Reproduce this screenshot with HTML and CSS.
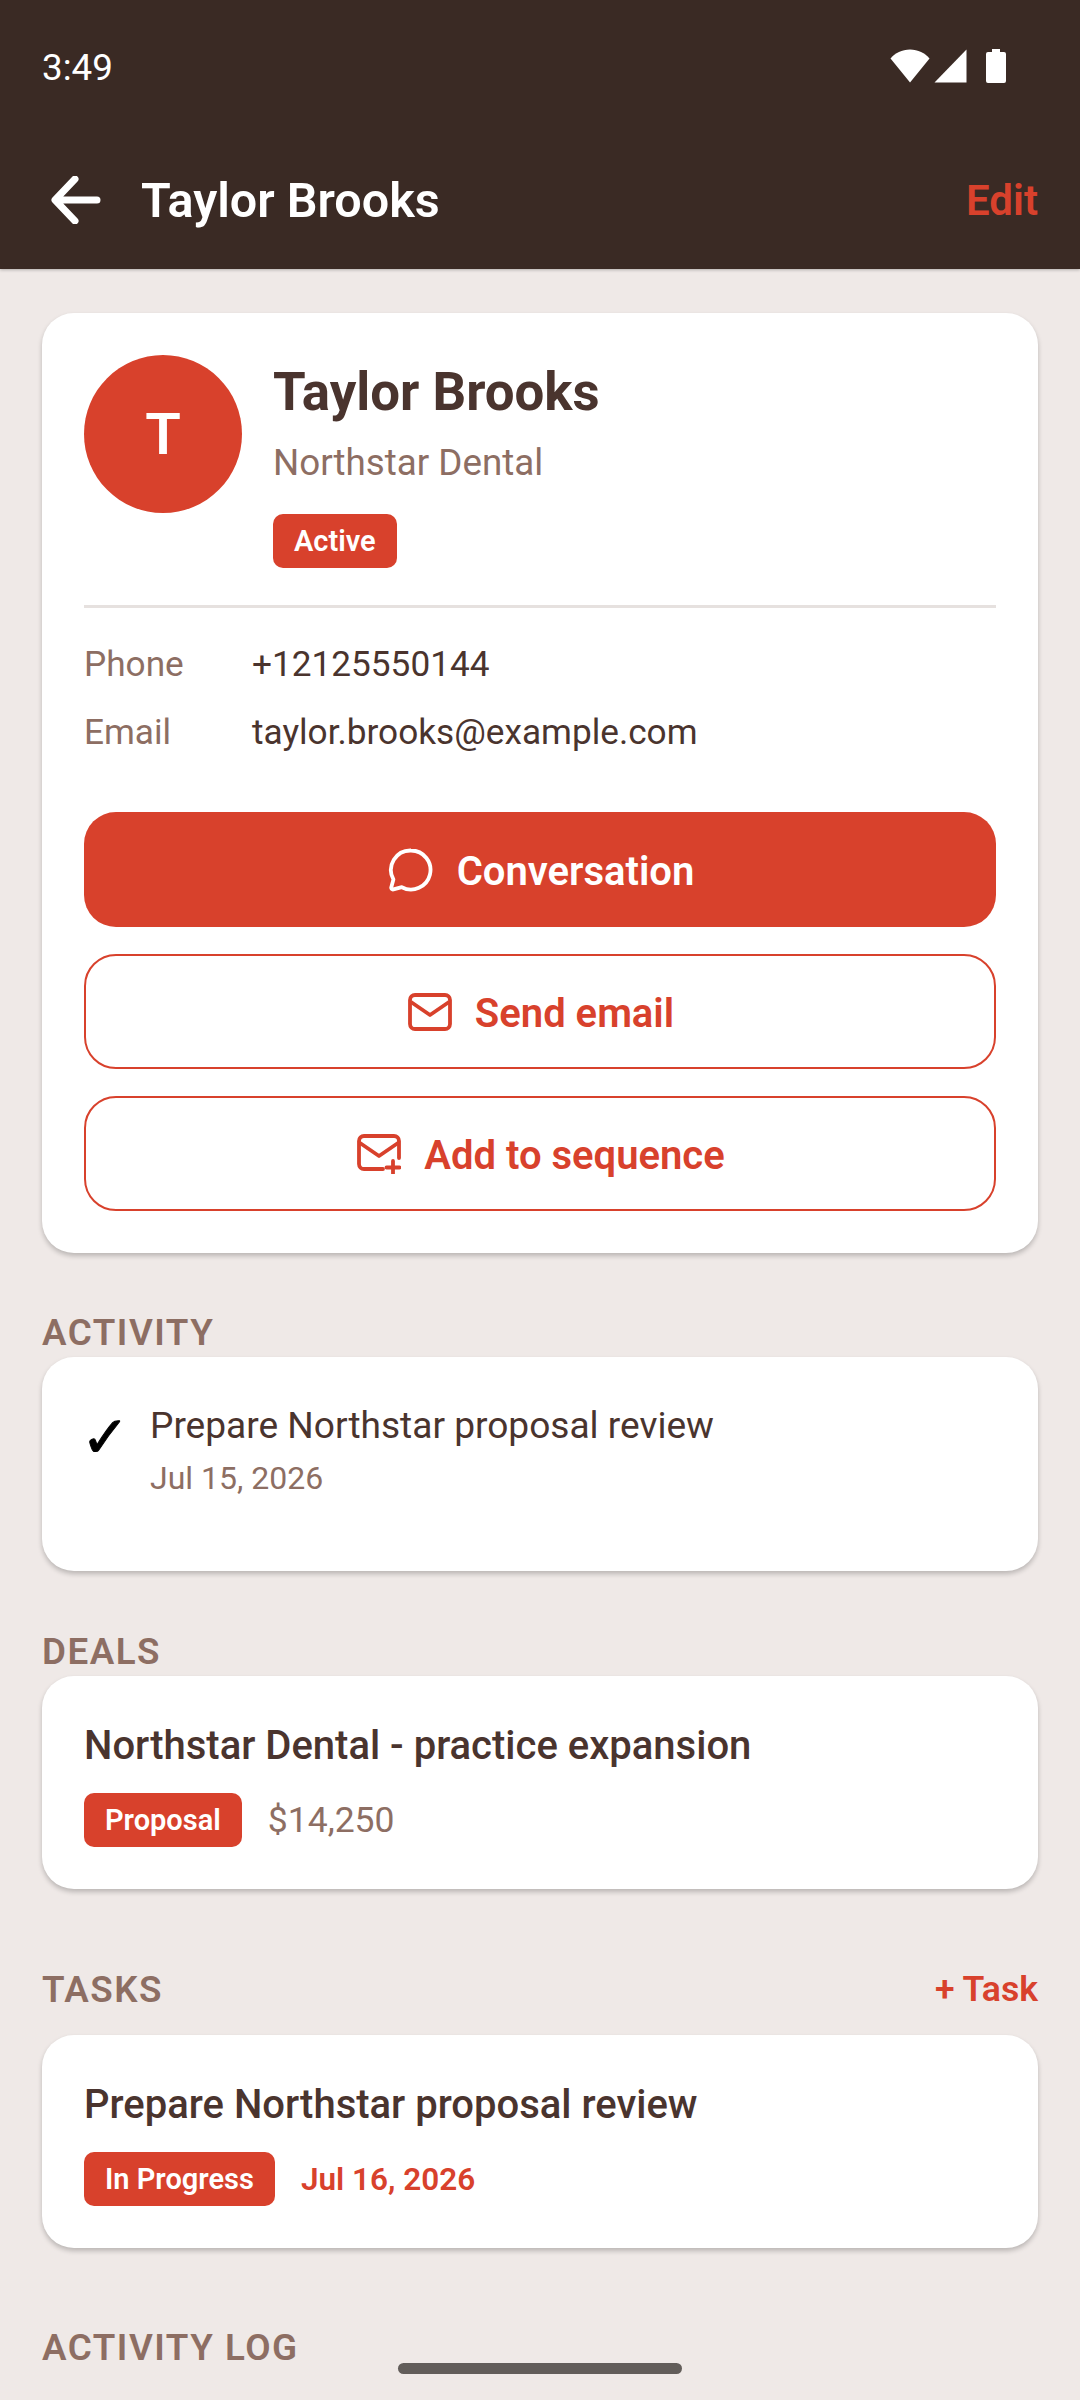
FILE: index.html
```html
<!DOCTYPE html>
<html>
<head lang="en">
    <meta charset="UTF-8">
    <title>Taylor Brooks</title>
    <link rel="stylesheet" href="styles.css">
</head>
<body>
<div class="screen">
    <header class="header">
        <div class="status">
            <span class="time">3:49</span>
            <div class="status-icons">
                <svg class="wifi" width="40" height="34" viewBox="0 0 40 34"><path d="M20 33.500 0.500 9.500C5 4 12 0.500 20 0.500s15 3.500 19.500 9z" fill="#fff"/></svg>
                <svg class="signal" width="33" height="34" viewBox="0 0 33 34"><path d="M32.500 0.500V33.500H0.500z" fill="#fff"/></svg>
                <svg class="battery" width="20" height="34" viewBox="0 0 20 34"><path d="M6 0h8v3h4a2 2 0 0 1 2 2v27a2 2 0 0 1-2 2H2a2 2 0 0 1-2-2V5a2 2 0 0 1 2-2h4z" fill="#fff"/></svg>
            </div>
        </div>
        <div class="appbar">
            <svg class="back" width="50" height="48" viewBox="0 0 50 48"><path d="M46 24H5M24 3 4 24l20 21" fill="none" stroke="#fff" stroke-width="7" stroke-linecap="round" stroke-linejoin="round"/></svg>
            <span class="appbar-title">Taylor Brooks</span>
            <span class="appbar-edit">Edit</span>
        </div>
    </header>

    <main class="content">
        <section class="card profile">
            <div class="hero">
                <div class="avatar">T</div>
                <div class="hero-info">
                    <div class="hero-name">Taylor Brooks</div>
                    <div class="hero-company">Northstar Dental</div>
                    <span class="chip chip-active">Active</span>
                </div>
            </div>
            <div class="divider"></div>
            <div class="field">
                <span class="field-label">Phone</span>
                <span class="field-value">+12125550144</span>
            </div>
            <div class="field">
                <span class="field-label">Email</span>
                <span class="field-value">taylor.brooks@example.com</span>
            </div>
            <div class="actions">
                <div class="btn btn-fill">
                    <svg width="46" height="46" viewBox="0 0 46 46"><path d="M23 3.500a19.500 19.500 0 1 1-9.200 36.700L5.500 42.400c-1.500.4-2.600-.8-2.200-2.200l2.100-7.800A19.500 19.500 0 0 1 23 3.500z" fill="none" stroke="#fff" stroke-width="3.800" stroke-linejoin="round"/></svg>
                    <span class="btn-text">Conversation</span>
                </div>
                <div class="btn btn-line">
                    <svg width="44" height="38" viewBox="0 0 44 38"><rect x="2" y="2" width="40" height="34" rx="5" fill="none" stroke="#d8412c" stroke-width="3.800"/><path d="M3 9l19 13L41 9" fill="none" stroke="#d8412c" stroke-width="3.800" stroke-linejoin="round"/></svg>
                    <span class="btn-text">Send email</span>
                </div>
                <div class="btn btn-line">
                    <svg width="44" height="40" viewBox="0 0 44 40"><path d="M26 35H7a5 5 0 0 1-5-5V7a5 5 0 0 1 5-5h30a5 5 0 0 1 5 5v17" fill="none" stroke="#d8412c" stroke-width="3.800" stroke-linecap="round"/><path d="M3 9l19 13L41 9M36 27v12.500M29.500 33.500h13" fill="none" stroke="#d8412c" stroke-width="3.800" stroke-linecap="round" stroke-linejoin="round"/></svg>
                    <span class="btn-text">Add to sequence</span>
                </div>
            </div>
        </section>

        <div class="section-head section-activity"><span class="section-label">ACTIVITY</span></div>
        <section class="card activity">
            <span class="check">✓</span>
            <div class="activity-body">
                <div class="activity-title">Prepare Northstar proposal review</div>
                <div class="activity-date">Jul 15, 2026</div>
            </div>
        </section>

        <div class="section-head section-deals"><span class="section-label">DEALS</span></div>
        <section class="card item">
            <div class="item-title">Northstar Dental - practice expansion</div>
            <div class="item-meta">
                <span class="chip">Proposal</span>
                <span class="deal-value">$14,250</span>
            </div>
        </section>

        <div class="section-head section-tasks">
            <span class="section-label">TASKS</span>
            <span class="section-action">+ Task</span>
        </div>
        <section class="card item">
            <div class="item-title">Prepare Northstar proposal review</div>
            <div class="item-meta">
                <span class="chip">In Progress</span>
                <span class="task-date">Jul 16, 2026</span>
            </div>
        </section>

        <div class="section-head section-log"><span class="section-label">ACTIVITY LOG</span></div>
    </main>

    <div class="gesture"></div>
</div>
</body>
</html>
```

FILE: styles.css
```css
* {
    margin: 0;
    padding: 0;
    box-sizing: border-box;
}

body {
    font-family: Roboto, "Liberation Sans", sans-serif;
    background-color: #efe9e7;
}

.screen {
    width: 1080px;
    height: 2400px;
    overflow: hidden;
    position: relative;
    background-color: #efe9e7;
}

/* header */
.header {
    height: 269px;
    background-color: #3a2a24;
    box-shadow: 0 1px 3px rgba(0, 0, 0, .25);
}

.status {
    height: 132px;
    padding: 0 42px;
    display: flex;
    justify-content: space-between;
    align-items: flex-start;
}

.time {
    margin-top: 47px;
    font-size: 36.750px;
    line-height: 42px;
    color: #fff;
}

.status-icons {
    margin-top: 49px;
    margin-right: 32px;
    display: flex;
    gap: 4px;
}

.battery {
    margin-left: 15px;
}

.appbar {
    height: 136px;
    padding-left: 51px;
    padding-right: 42px;
    display: flex;
    align-items: center;
}

.appbar-title {
    margin-left: 40px;
    flex: 1;
    font-size: 48.500px;
    font-weight: 600;
    color: #fff;
}

.appbar-edit {
    font-size: 42px;
    font-weight: 600;
    color: #d8412c;
}

/* cards */
.content {
    padding: 44px 42px 0;
}

.card {
    background-color: #fff;
    border-radius: 32px;
    box-shadow: 0 3px 5px rgba(0, 0, 0, .22);
    padding: 42px;
}

.hero {
    display: flex;
    gap: 31px;
    height: 224px;
}

.avatar {
    width: 158px;
    height: 158px;
    border-radius: 50%;
    background-color: #d8412c;
    color: #fff;
    font-size: 58px;
    font-weight: 600;
    display: flex;
    align-items: center;
    justify-content: center;
}

.hero-name {
    font-size: 52.800px;
    font-weight: 700;
    line-height: 74px;
    color: #4a342e;
}

.hero-company {
    margin-top: 11px;
    font-size: 36.750px;
    line-height: 46px;
    color: #8d6e63;
}

.chip {
    display: inline-block;
    height: 54px;
    padding: 0 21px;
    background-color: #d8412c;
    border-radius: 10px;
    color: #fff;
    font-size: 29px;
    font-weight: 600;
    line-height: 54px;
}

.chip-active {
    margin-top: 28px;
}

.divider {
    margin-top: 26px;
    margin-bottom: 39px;
    height: 3px;
    background-color: #e6e1df;
}

.field {
    margin-bottom: 33px;
    display: flex;
    font-size: 35.200px;
    line-height: 35px;
}

.field-label {
    width: 168px;
    color: #8d6e63;
}

.field-value {
    color: #4a342e;
}

.actions {
    margin-top: 62px;
    display: flex;
    flex-direction: column;
    gap: 27px;
}

.btn {
    height: 115px;
    border-radius: 32px;
    display: flex;
    align-items: center;
    justify-content: center;
    gap: 23px;
    font-size: 40px;
    font-weight: 600;
}

.btn-text {
    padding-top: 3px;
}

.btn svg {
    margin-left: 2px;
}

.btn-fill {
    background-color: #d8412c;
    color: #fff;
}

.btn-line {
    border: 2.800px solid #d8412c;
    color: #d8412c;
}

/* sections */
.section-head {
    display: flex;
    justify-content: space-between;
    align-items: center;
    height: 38px;
}

.section-activity {
    margin-top: 60px;
    margin-bottom: 6px;
}

.section-deals {
    margin-top: 61px;
    margin-bottom: 6px;
}

.section-tasks {
    margin-top: 81px;
    margin-bottom: 27px;
}

.section-log {
    margin-top: 80px;
}

.section-label {
    font-size: 36.750px;
    font-weight: 600;
    letter-spacing: 1.500px;
    color: #8d6e63;
}

.section-action {
    font-size: 35.600px;
    font-weight: 600;
    color: #d8412c;
}

.activity {
    height: 214px;
    display: flex;
    gap: 27px;
    padding-top: 47px;
    padding-left: 39px;
}

.check {
    width: 42px;
    font-family: "DejaVu Sans", sans-serif;
    font-size: 58px;
    line-height: 66px;
    color: #000;
    -webkit-text-stroke: 1px #000;
}

.activity-title {
    font-size: 37.100px;
    line-height: 44px;
    color: #4a342e;
}

.activity-date {
    margin-top: 12px;
    font-size: 32px;
    line-height: 36px;
    color: #8d6e63;
}

.item {
    height: 213px;
}

.item-title {
    font-size: 40px;
    font-weight: 500;
    line-height: 56px;
    color: #4a342e;
}

.item-meta {
    margin-top: 19px;
    display: flex;
    align-items: center;
    gap: 26px;
}

.deal-value {
    font-size: 35.500px;
    color: #8d6e63;
}

.task-date {
    font-size: 31.500px;
    font-weight: 600;
    color: #d8412c;
}

.gesture {
    position: absolute;
    left: 398px;
    bottom: 26px;
    width: 284px;
    height: 11px;
    border-radius: 6px;
    background-color: #625d5a;
}
```
